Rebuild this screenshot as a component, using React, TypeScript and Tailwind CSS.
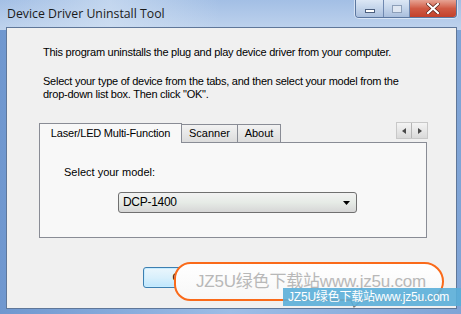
import React from "react";

const sans = { fontFamily: '"Liberation Sans", Arial, sans-serif' };
const cjk = { fontFamily: '"Liberation Sans", Arial, "Noto Sans CJK SC", sans-serif' };

function CaptionButtons() {
  return (
    <div className="flex h-[18px] rounded-b-[4px] border border-t-0 border-[#5b77a0] overflow-hidden shadow-[0_0_0_1px_rgba(255,255,255,0.5)]">
      <div className="w-[28px] flex items-center justify-center bg-gradient-to-b from-[#dce7f5] via-[#c3d4ea] to-[#a9bedd] border-r border-[#6f88b0]">
        <div className="w-[10px] h-[4px] mt-[5px] bg-white border border-[#4c5f7e]" />
      </div>
      <div className="w-[26px] flex items-center justify-center bg-gradient-to-b from-[#dce7f5] via-[#c3d4ea] to-[#a9bedd] border-r border-[#6f88b0]">
        <div className="w-[10px] h-[8px] border border-[#8d9fb9] bg-[#dfe7f2]" />
      </div>
      <div className="w-[46px] flex items-center justify-center bg-gradient-to-b from-[#e6a394] via-[#d05a44] to-[#c2402a]">
        <svg width="14" height="11" viewBox="0 0 14 11">
          <path d="M2 1 L12 10 M12 1 L2 10" stroke="#5a2018" strokeWidth="3.6" strokeLinecap="square" />
          <path d="M2 1 L12 10 M12 1 L2 10" stroke="#ffffff" strokeWidth="2.2" strokeLinecap="square" />
        </svg>
      </div>
    </div>
  );
}

export default function App() {
  return (
    <div className="relative w-[461px] h-[314px] overflow-hidden bg-gradient-to-r from-[#6f97cf] via-[#9dbde6] to-[#7fa4d6]" style={sans}>
      <div className="absolute inset-x-0 top-0 h-[30px] bg-gradient-to-b from-[#a3bfe5] to-[#bfd3ed]" />
      <div className="absolute left-0 top-0 w-[220px] h-[27px] bg-gradient-to-r from-transparent via-[#d6e4f4]/60 to-transparent" />
      <div className="relative flex flex-col h-full">
        {/* Title bar */}
        <div className="flex h-[27px] pl-[7px] pr-[4px] items-start">
          <div className="flex-1 pt-[5px] text-[12.3px] text-[#1b1b1b]" style={{ fontFamily: '"Open Sans", "Liberation Sans", sans-serif' }}>
            Device Driver Uninstall Tool
          </div>
          <CaptionButtons />
        </div>
        {/* Client area */}
        <div className="relative flex-1 ml-[6px] mr-[4px] mb-[5px] border border-[#5f7799] bg-[#f0f0f0] text-[11px] text-black leading-[13px]">
          <div className="pl-[36px] pt-[18px] tracking-[-0.25px]">
            This program uninstalls the plug and play device driver from your computer.
          </div>
          <div className="pl-[36px] pt-[16px] pr-[30px] tracking-[-0.25px]">
            Select your type of device from the tabs, and then select your model from the
            <br />
            drop-down list box. Then click "OK".
          </div>
          {/* Tabs */}
          <div className="ml-[32px] mr-[28px] mt-[21px] flex items-end">
            <div className="relative z-10 w-[143px] h-[20px] -mb-px flex items-center justify-center border border-b-0 border-[#898c95] bg-[#f8f8f8] tracking-[-0.2px]">
              Laser/LED Multi-Function
            </div>
            <div className="w-[56px] h-[18px] flex items-center justify-center border border-l-0 border-b-0 border-[#898c95] bg-gradient-to-b from-[#f2f2f2] to-[#dcdcdc]">
              Scanner
            </div>
            <div className="w-[43px] h-[18px] flex items-center justify-center border border-l-0 border-b-0 border-[#898c95] bg-gradient-to-b from-[#f2f2f2] to-[#dcdcdc]">
              About
            </div>
            <div className="flex-1" />
            <div className="flex mb-[3px] border border-[#c8c8c8]">
              <div className="w-[15px] h-[15px] flex items-center justify-center bg-gradient-to-b from-[#f4f4f4] to-[#d9d9d9] border-r border-[#b5b5b5]">
                <svg width="4" height="6" viewBox="0 0 4 6"><path d="M4 0 L0 3 L4 6 Z" fill="#4a4a4a" /></svg>
              </div>
              <div className="w-[15px] h-[15px] flex items-center justify-center bg-gradient-to-b from-[#f4f4f4] to-[#d9d9d9]">
                <svg width="4" height="6" viewBox="0 0 4 6"><path d="M0 0 L4 3 L0 6 Z" fill="#4a4a4a" /></svg>
              </div>
            </div>
          </div>
          <div className="ml-[32px] mr-[29px] h-[96px] border border-[#898c95] bg-[#f8f8f8] pl-[24px] pt-[23px]">
            <div>Select your model:</div>
            <div className="ml-[54px] mt-[13px] w-[239px] h-[21px] rounded-[3px] border border-[#707070] bg-gradient-to-b from-[#f2f2f2] via-[#e6ebe6] to-[#d6d6d6] flex items-center justify-between pl-[4px] pr-[6px] text-[12px]">
              <span className="tracking-[-0.3px]">DCP-1400</span>
              <svg width="7" height="4" viewBox="0 0 7 4"><path d="M0 0 L7 0 L3.5 4 Z" fill="#000" /></svg>
            </div>
          </div>
          {/* Buttons */}
          <div className="ml-[136px] mt-[29px] flex gap-[12px]">
            <div className="w-[75px] h-[21px] rounded-[3px] border border-[#3c7fb1] bg-gradient-to-b from-[#eaf6fd] via-[#d9f0fc] to-[#bee6fd] shadow-[inset_0_0_0_1px_#c7ecff] flex items-center justify-center">
              OK
            </div>
            <div className="w-[75px] h-[21px] rounded-[3px] border border-[#707070] bg-gradient-to-b from-[#f2f2f2] to-[#d0d0d0] flex items-center justify-center">
              Cancel
            </div>
          </div>
        </div>
      </div>
      {/* Watermark overlay */}
      <div className="absolute left-[174px] top-[262px] w-[270px] h-[39px] rounded-[22px_26px_26px_22px] border-2 border-[#fa6a1a] bg-gradient-to-b from-white to-[#f7f7f7] flex items-center pl-[20px]">
        <span className="text-[17px] text-[#b8b8b8] tracking-[-0.2px]" style={cjk}>JZ5U绿色下载站www.jz5u.com</span>
      </div>
      <svg className="absolute left-[348px] top-[299px]" width="14" height="10" viewBox="0 0 14 10">
        <path d="M2 0 L6 8 L13 2" stroke="#7a7a7a" strokeWidth="1.2" fill="none" />
      </svg>
      <div className="absolute left-[283px] top-[288px] w-[178px] h-[18px] bg-[#5aaed8]/90 flex items-center pl-[5px]">
        <span className="text-[12px] text-white tracking-[-0.2px]" style={cjk}>JZ5U绿色下载站www.jz5u.com</span>
      </div>
    </div>
  );
}
